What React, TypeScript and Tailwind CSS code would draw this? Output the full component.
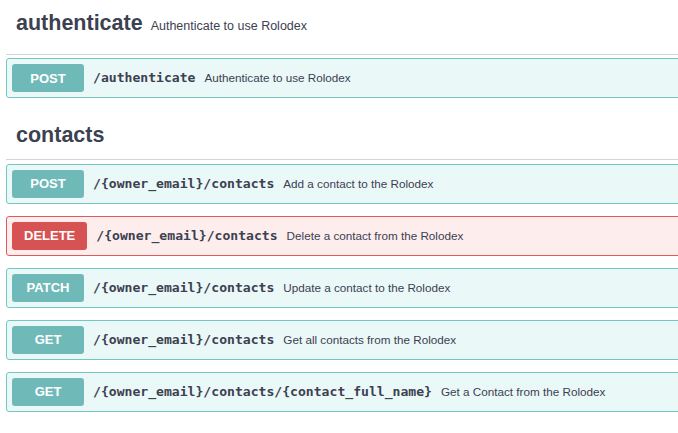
import React from 'react'

type Op = {
  method: 'POST' | 'DELETE' | 'PATCH' | 'GET'
  path: string
  summary: string
}

const METHOD_STYLES: Record<Op['method'], { block: string; badge: string }> = {
  POST: { block: 'bg-[#ebf8f8] border-[#72c6c3]', badge: 'bg-[#70b9b9]' },
  PATCH: { block: 'bg-[#ebf8f8] border-[#72c6c3]', badge: 'bg-[#70b9b9]' },
  GET: { block: 'bg-[#ebf8f8] border-[#72c6c3]', badge: 'bg-[#70b9b9]' },
  DELETE: { block: 'bg-[#fdeded] border-[#e05a5a]', badge: 'bg-[#d75252]' },
}

const contacts: Op[] = [
  { method: 'POST', path: '/{owner_email}/contacts', summary: 'Add a contact to the Rolodex' },
  { method: 'DELETE', path: '/{owner_email}/contacts', summary: 'Delete a contact from the Rolodex' },
  { method: 'PATCH', path: '/{owner_email}/contacts', summary: 'Update a contact to the Rolodex' },
  { method: 'GET', path: '/{owner_email}/contacts', summary: 'Get all contacts from the Rolodex' },
  {
    method: 'GET',
    path: '/{owner_email}/contacts/{contact_full_name}',
    summary: 'Get a Contact from the Rolodex',
  },
]

function OpBlock({ op }: { op: Op }) {
  const s = METHOD_STYLES[op.method]
  return (
    <div className={`flex items-center h-[40px] border rounded-[3px] pl-[5px] mb-[12px] ${s.block}`}>
      <span
        className={`${s.badge} h-[28px] min-w-[72px] px-[12px] rounded-[3px] flex items-center justify-center text-white text-[13px] font-bold`}
      >
        {op.method}
      </span>
      <span
        className="ml-[9px] text-[#3b4151] text-[13.1px] font-semibold"
        style={{ fontFamily: '"DejaVu Sans Mono", "Liberation Mono", monospace' }}
      >
        {op.path}
      </span>
      <span className="ml-[9px] text-[#3b4151] text-[11.7px]">{op.summary}</span>
    </div>
  )
}

function TagHeading({ name, desc, top, bottom }: { name: string; desc?: string; top: string; bottom: string }) {
  return (
    <div className={`flex items-baseline pl-[10px] border-b border-[#d3d5d8] ${top} ${bottom}`}>
      <span className="text-[21.5px] font-bold text-[#3b4151]">{name}</span>
      {desc && <span className="ml-[8px] text-[12.5px] text-[#3b4151]">{desc}</span>}
    </div>
  )
}

export default function App() {
  return (
    <div
      className="w-[678px] h-[433px] overflow-hidden bg-white"
      style={{ fontFamily: '"Liberation Sans", Arial, sans-serif' }}
    >
      <div className="w-[720px] pl-[6px]">
        <TagHeading name="authenticate" desc="Authenticate to use Rolodex" top="pt-[7px]" bottom="pb-[15px]" />
        <div className="mt-[3px]">
          <OpBlock op={{ method: 'POST', path: '/authenticate', summary: 'Authenticate to use Rolodex' }} />
        </div>

        <div className="mt-[21px]">
          <TagHeading name="contacts" top="pt-[0px]" bottom="pb-[7px]" />
        </div>
        <div className="mt-[4px]">
          {contacts.map((op, i) => (
            <OpBlock key={i} op={op} />
          ))}
        </div>
      </div>
    </div>
  )
}
